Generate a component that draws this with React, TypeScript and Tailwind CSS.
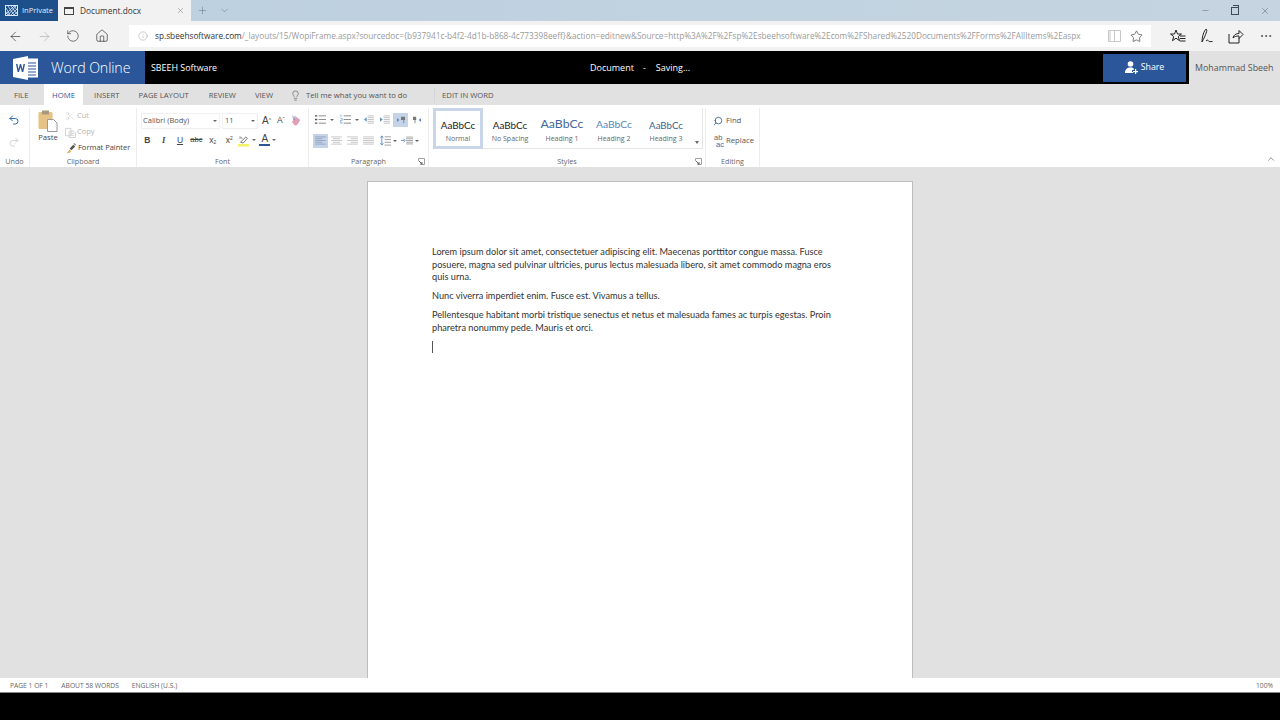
import React from 'react';
import {
  ArrowLeft, ArrowRight, ChevronDown, ChevronUp, House, Info, Lightbulb, Minus, MoreHorizontal,
  Plus, Redo2, RotateCw, Scissors, Search, Star, Undo2, X,
} from 'lucide-react';

const ui = "font-['Open_Sans',sans-serif]";

function WordLogo() {
  return (
    <svg width="26" height="24" viewBox="0 0 26 24">
      <rect x="9" y="2.5" width="16" height="19" fill="#fff" />
      <path d="M12 7h11M12 10h11M12 13h11M12 16h11M12 19h11" stroke="#2b579a" strokeWidth="1.2" />
      <path d="M0 3l15-3v24l-15-3z" fill="#fff" />
      <path d="M3 8l1.600 8h1.400l1.500-5 1.400 5h1.400l1.700-8h-1.500l-1 5.200-1.400-5.200h-1.200l-1.500 5.200-.9-5.200z" fill="#2b579a" />
    </svg>
  );
}

function InPrivateIcon() {
  return (
    <svg width="13" height="11" viewBox="0 0 13 11">
      <rect x="0.5" y="0.500" width="12" height="10" fill="none" stroke="#dbe7f5" />
      <path d="M1 3l4 7M3 1l6 9M6 1l6 8M9 1l3 4M1 7l2 3M1 9l8-8M3 10l8-9M6 10l6-6M9 10l3-3" stroke="#dbe7f5" strokeWidth=".8" />
    </svg>
  );
}

function HubIcon() {
  return (
    <svg width="16" height="15" viewBox="0 0 16 15" fill="none" stroke="#222" strokeWidth="1">
      <path d="M6 1l1.500 4h4l-3.200 2.500 1.200 4.200-3.500-2.500-3.500 2.500 1.200-4.200L.5 5h4z" />
      <path d="M10 7h5.500M10 9.500h5.500M10 12h5.500" />
    </svg>
  );
}

function PenIcon() {
  return (
    <svg width="16" height="16" viewBox="0 0 16 16" fill="none" stroke="#222" strokeWidth="1">
      <path d="M3 14c0-4 1-9 3.500-12.500 1.500-1 1.500 1 1 2.500C6.500 7 5 10.500 3 14zM7 13c1.500-1.500 2-1 2.500 0s1.500.5 4 .5" />
    </svg>
  );
}

function ShareIcon() {
  return (
    <svg width="16" height="15" viewBox="0 0 16 15" fill="none" stroke="#222" strokeWidth="1">
      <path d="M1 5v9h10V9M5 9c.500-3 3-4.500 6-4.500V1.500l4 4-4 4V7C8.500 7 6.500 7.500 5 9z" />
    </svg>
  );
}

function ShareUserIcon() {
  return (
    <svg width="13" height="13" viewBox="0 0 13 13" fill="#fff">
      <circle cx="5.500" cy="3" r="2.800" />
      <path d="M0 12c0-3.500 2-5.500 5.500-5.500 1.500 0 2.500.4 3.200 1V9H7v2h1v1z" />
      <path d="M10 8h1.200v2H13v1.200h-1.800V13H10v-1.800H8V10h2z" />
    </svg>
  );
}

function PasteIcon() {
  return (
    <svg width="20" height="22" viewBox="0 0 20 22">
      <rect x="0.500" y="2" width="14" height="17" rx="1" fill="#e6c284" />
      <rect x="4" y="0.500" width="7" height="4" fill="#a8977c" />
      <path d="M9.500 9.500h6l3.500 3.500v8.500H9.500z" fill="#fff" stroke="#9a9a9a" />
    </svg>
  );
}

function CopyIcon() {
  return (
    <svg width="11" height="11" viewBox="0 0 12 12" fill="none" stroke="#cfcfcf">
      <path d="M.5 1.500h6v8h-6zM4.500 4.500h5l2 2v5h-7z" fill="#fff" />
      <path d="M6 7h4M6 9h4" />
    </svg>
  );
}

function BrushIcon() {
  return (
    <svg width="12" height="12" viewBox="0 0 13 13">
      <path d="M1 12c2-.5 3-2 3.500-4L7 10c-1.500 1.500-3.500 2.500-6 2z" fill="#d9b262" />
      <path d="M5 7l4-4 2 2-4 4z" fill="#555" />
      <path d="M9 2l1-1 2 2-1 1z" fill="#888" />
    </svg>
  );
}

function EraserIcon() {
  return (
    <svg width="11" height="11" viewBox="0 0 13 13">
      <path d="M1 8l5-6 5 4-4 6H4z" fill="#e0a0b8" />
      <path d="M2 1l1.500 5M5 1L3.500 6" stroke="#8c8cc0" fill="none" />
    </svg>
  );
}

function HighlightIcon() {
  return (
    <svg width="12" height="13" viewBox="0 0 14 14">
      <path d="M3 9l6-6 2 1.500-5 5.500z" fill="none" stroke="#666" />
      <path d="M1 4h4M2 2l3 3" stroke="#777" strokeWidth=".8" />
      <rect x="0" y="11" width="13" height="3" fill="#f4f06a" />
    </svg>
  );
}

function ListLines({ numbered }: { numbered?: boolean }) {
  return (
    <svg width="11" height="11" viewBox="0 0 12 12" stroke="#777" strokeWidth=".9">
      <path d="M4 2h8M4 6h8M4 10h8" />
      {numbered ? (
        <path d="M1 .5v3M.5 5h2v2h-2v2h2M.500 10h2" stroke="#7aa0cc" strokeWidth=".8" fill="none" />
      ) : (
        <path d="M0 2h2.500M0 6h2.500M0 10h2.500" strokeWidth="1.500" stroke="#555" />
      )}
    </svg>
  );
}

function Indent({ flip }: { flip?: boolean }) {
  return (
    <svg width="11" height="9" viewBox="0 0 12 10">
      <path d="M5 1h7M5 3h7M5 5h7M5 7h7M5 9h7" stroke="#bdbdbd" strokeWidth="1" />
      {flip ? <path d="M4 5L1 2.500v5z" fill="#5c8cc2" /> : <path d="M1 5l3-2.500v5z" fill="#5c8cc2" />}
    </svg>
  );
}

function Direction({ rtl }: { rtl?: boolean }) {
  return (
    <svg width="10" height="8" viewBox="0 0 12 10" fill="#777">
      <path d={rtl ? 'M1 1h4v4H4v4H3V5H1z' : 'M6 1h5v4h-1v4H9V5H6z'} />
      <path d={rtl ? 'M8 5l3-2.500v5z' : 'M1 2.500L4 5 1 7.500z'} fill="#5c8cc2" />
    </svg>
  );
}

function Align({ kind }: { kind: 'left' | 'center' | 'right' | 'justify' }) {
  const d = {
    left: 'M0 1h12M0 3h8M0 5h12M0 7h8M0 9h12',
    center: 'M0 1h12M2 3h8M0 5h12M2 7h8M0 9h12',
    right: 'M0 1h12M4 3h8M0 5h12M4 7h8M0 9h12',
    justify: 'M0 1h12M0 3h12M0 5h12M0 7h12M0 9h12',
  }[kind];
  return (
    <svg width="11" height="9" viewBox="0 0 12 10" fill="none" stroke={kind === 'left' ? '#8fa3c0' : '#c2c2c2'}>
      <path d={d} />
    </svg>
  );
}

function LineSpacing() {
  return (
    <svg width="11" height="11" viewBox="0 0 12 12" fill="none" stroke="#999">
      <path d="M5 2h7M5 5h7M5 8h7M5 11h7" />
      <path d="M2 1v10M.5 3L2 1l1.500 2M.5 9L2 11l1.500-2" stroke="#5c8cc2" />
    </svg>
  );
}

function ParaSpacing() {
  return (
    <svg width="12" height="9" viewBox="0 0 14 10" fill="none" stroke="#999">
      <path d="M6 1h8M6 3h8M6 5h8M6 7h8M6 9h8" />
      <path d="M0 5h4M3 3l2 2-2 2" stroke="#5c8cc2" />
    </svg>
  );
}

function Launcher() {
  return (
    <svg width="7" height="7" viewBox="0 0 7 7" fill="none" stroke="#a0a0a0">
      <path d="M.5 3V.5H6.500V6.500H3" />
      <path d="M1 3l3 3M4 4v2H2" stroke="#666" />
    </svg>
  );
}

function ReplaceIcon() {
  return (
    <span className="relative block w-[12px] h-[13px] text-[#666]">
      <span className="absolute left-[1px] top-[-1px] text-[7.500px] leading-none font-['Liberation_Sans',sans-serif]">ab</span>
      <span className="absolute left-[3px] top-[6px] text-[7.500px] leading-none text-[#2f6cae] font-['Liberation_Sans',sans-serif]">ac</span>
    </span>
  );
}

function Caret({ className = '' }: { className?: string }) {
  return <span className={`inline-block border-x-[2px] border-t-[2px] border-x-transparent border-t-[#666] ${className}`} />;
}

function Group({ label, width, launcher, children }: { label: string; width: string; launcher?: boolean; children: React.ReactNode }) {
  return (
    <div className={`${width} relative flex flex-col h-[59px] mt-[3px] border-r border-[#ededed]`}>
      <div className="flex-1 min-h-0">{children}</div>
      <div className="h-[13px] text-center text-[7.200px] leading-[13px] text-[#666] pt-[1px]">{label}</div>
      {launcher && <span className="absolute right-[3px] bottom-[2px] flex"><Launcher /></span>}
    </div>
  );
}

function ParaBtn({ active, children }: { active?: boolean; children: React.ReactNode }) {
  return (
    <span className={`w-[15px] h-[14px] mr-px flex items-center justify-center ${active ? 'bg-[#c5d3e9]' : ''}`}>{children}</span>
  );
}

function FontBtn({ children, className = '' }: { children: React.ReactNode; className?: string }) {
  return <span className={`w-[16.400px] text-center text-[#444] leading-none ${className}`}>{children}</span>;
}

const styleItems = [
  { name: 'No Spacing', cls: 'text-[9.900px] text-[#222] mt-[10px]', label: 'mt-[1px]' },
  { name: 'Heading 1', cls: 'text-[12.300px] text-[#3f6797] mt-[9px]', label: 'mt-[2px]' },
  { name: 'Heading 2', cls: 'text-[10.300px] text-[#5a86bc] mt-[9px]', label: 'mt-[2px]' },
  { name: 'Heading 3', cls: 'text-[9.700px] text-[#3b5f8c] mt-[10px]', label: 'mt-[1px]' },
];

function Ribbon() {
  return (
    <div className="relative h-[62px] bg-white flex">
      <Group label="Undo" width="w-[30px]">
        <div className="flex flex-col items-center gap-[10px] pt-[6px] pr-[1px]">
          <Undo2 size={12} strokeWidth={2} className="text-[#2f6cae]" />
          <Redo2 size={12} strokeWidth={1.500} className="text-[#c8c8c8]" />
        </div>
      </Group>

      <Group label="Clipboard" width="w-[107px]">
        <div className="flex pl-[8px]">
          <div className="w-[20px] flex flex-col items-center pt-[2px] shrink-0">
            <PasteIcon />
            <span className="text-[7.700px] leading-[10px] text-[#444]">Paste</span>
          </div>
          <div className="ml-[7px] flex flex-col text-[7.500px]">
            <div className="h-[16px] flex items-center gap-[2px] text-[#b5b5b5]"><Scissors size={10} strokeWidth={1} className="text-[#c6c6c6]" />Cut</div>
            <div className="h-[16px] flex items-center gap-[1px] text-[#b5b5b5]"><CopyIcon />Copy</div>
            <div className="h-[16px] flex items-center gap-[1px] text-[#444] whitespace-nowrap"><BrushIcon />Format Painter</div>
          </div>
        </div>
      </Group>

      <Group label="Font" width="w-[172px]">
        <div className="pl-[4px] pt-[4px]">
          <div className="flex items-center gap-[2px] h-[17px] text-[7.500px] text-[#555]">
            <div className="w-[79px] h-[16px] flex items-center justify-between pl-[1px] pr-[2px] border border-[#f0f0f0]">Calibri (Body)<Caret /></div>
            <div className="w-[36px] h-[16px] flex items-center justify-between px-[2px] border border-[#f0f0f0]">11<Caret /></div>
            <span className="ml-[2px] text-[10px] text-[#444] font-['Liberation_Sans',sans-serif]">A<sup className="text-[5px]">^</sup></span>
            <span className="ml-[4px] text-[8.500px] text-[#444] font-['Liberation_Sans',sans-serif]">A<sup className="text-[5px]">ˇ</sup></span>
            <span className="ml-[5px] flex"><EraserIcon /></span>
          </div>
          <div className="flex items-center h-[16px] mt-[3px] -ml-[2px] text-[8.500px] font-['Liberation_Sans',sans-serif]">
            <FontBtn className="font-bold">B</FontBtn>
            <FontBtn className="italic font-['Liberation_Serif',serif] font-bold">I</FontBtn>
            <FontBtn className="underline">U</FontBtn>
            <FontBtn className="line-through text-[7.500px]">abc</FontBtn>
            <FontBtn>x<sub className="text-[5px]">2</sub></FontBtn>
            <FontBtn>x<sup className="text-[5px]">2</sup></FontBtn>
            <span className="ml-[1px] flex items-center gap-[2px]"><HighlightIcon /><Caret /></span>
            <span className="ml-[3px] flex items-center gap-[2px]">
              <span className="flex flex-col items-center w-[11px] text-[10px] leading-[10px] text-[#444]">A<span className="block w-[11px] h-[2px] bg-[#2b579a]" /></span>
              <Caret />
            </span>
          </div>
        </div>
      </Group>

      <Group label="Paragraph" width="w-[120px]" launcher>
        <div className="pl-[4px] pt-[4px]">
          <div className="flex items-center h-[15px]">
            <ParaBtn><ListLines /></ParaBtn>
            <Caret className="ml-[1px] mr-[4px]" />
            <ParaBtn><ListLines numbered /></ParaBtn>
            <Caret className="ml-[1px] mr-[2px]" />
            <ParaBtn><Indent /></ParaBtn>
            <ParaBtn><Indent flip /></ParaBtn>
            <ParaBtn active><Direction /></ParaBtn>
            <ParaBtn><Direction rtl /></ParaBtn>
          </div>
          <div className="flex items-center h-[15px] mt-[6px]">
            <ParaBtn active><Align kind="left" /></ParaBtn>
            <ParaBtn><Align kind="center" /></ParaBtn>
            <ParaBtn><Align kind="right" /></ParaBtn>
            <ParaBtn><Align kind="justify" /></ParaBtn>
            <span className="ml-[3px] flex items-center gap-[2px]"><LineSpacing /><Caret /></span>
            <span className="ml-[4px] flex items-center gap-[2px]"><ParaSpacing /><Caret /></span>
          </div>
        </div>
      </Group>

      <Group label="Styles" width="w-[277px]" launcher>
        <div className="ml-[4px] mr-[2px] h-[41px] flex border-b border-r border-[#e6e6e6]">
          <div className="w-[50px] h-[41px] mr-px shrink-0 flex flex-col items-center border-[3px] border-[#c9d5e8]">
            <div className="mt-[7px] h-[15px] flex items-center whitespace-nowrap font-['Lato',sans-serif] text-[9.900px] text-[#222]">AaBbCc</div>
            <div className="mt-[1px] text-[7px] leading-[10px] text-[#666]">Normal</div>
          </div>
          {styleItems.map((s) => (
            <div key={s.name} className="w-[52px] h-[41px] shrink-0 flex flex-col items-center">
              <div className={`h-[15px] flex items-center whitespace-nowrap font-['Lato',sans-serif] ${s.cls}`}>AaBbCc</div>
              <div className={`text-[7px] leading-[10px] whitespace-nowrap text-[#666] ${s.label}`}>{s.name}</div>
            </div>
          ))}
          <div className="flex-1 flex items-end justify-center pb-[4px]"><Caret className="border-x-[2px] border-t-[3px]" /></div>
        </div>
      </Group>

      <Group label="Editing" width="w-[54px]">
        <div className="pl-[7px] pt-[3px] text-[7.700px] text-[#555]">
          <div className="h-[20px] flex items-center gap-[3px]"><Search size={10} strokeWidth={2} className="-scale-x-100 text-[#2f5d93]" />Find</div>
          <div className="h-[20px] flex items-center gap-[1px]"><ReplaceIcon />Replace</div>
        </div>
      </Group>

      <ChevronUp size={10} strokeWidth={1.500} className="absolute right-[4px] bottom-[3px] text-[#555]" />
    </div>
  );
}

export default function App() {
  return (
    <div className={`h-screen w-full overflow-hidden flex flex-col bg-black ${ui}`}>
      {/* browser tab strip */}
      <div className="h-[21px] shrink-0 flex items-center bg-gradient-to-r from-[#bcd0e0] to-[#c5d4e0]">
        <div className="w-[58px] h-full bg-[#1d4f8b] flex items-center gap-[4px] pl-[5px] text-[7.500px] text-[#e3eefa]">
          <InPrivateIcon />InPrivate
        </div>
        <div className="w-[133px] h-full bg-[#f2f2f2] flex items-center pl-[5px] pr-[6px] text-[#333]">
          <span className="w-[10px] h-[8px] border border-[#444] border-t-2 mr-[6px] ml-[1px]" />
          <span className="flex-1 text-[8.300px] pt-px">Document.docx</span>
          <X size={9} strokeWidth={1} className="text-[#555]" />
        </div>
        <Plus size={11} strokeWidth={1.200} className="ml-[6px] text-[#607a90]" />
        <ChevronDown size={11} strokeWidth={1.200} className="ml-[11px] text-[#607a90]" />
        <div className="ml-auto flex items-center gap-[21px] pr-[10px] text-[#3d4a55]">
          <Minus size={9} strokeWidth={1} />
          <span className="relative w-[8px] h-[8px] border border-[#3d4a55] after:absolute after:left-[1px] after:top-[-3px] after:w-[6px] after:h-[6px] after:border-t after:border-r after:border-[#3d4a55]" />
          <X size={10} strokeWidth={1} />
        </div>
      </div>

      {/* browser nav bar */}
      <div className="h-[30px] shrink-0 bg-[#f2f2f2] flex items-center">
        <ArrowLeft size={15} strokeWidth={1} className="ml-[8px] text-[#222]" />
        <ArrowRight size={15} strokeWidth={1} className="ml-[14px] text-[#a9a9a9]" />
        <RotateCw size={14} strokeWidth={1} className="ml-[14px] -scale-x-100 text-[#222]" />
        <House size={14} strokeWidth={1.100} className="ml-[15px] text-[#222]" />
        <div className="ml-[20px] w-[1022px] h-[22px] bg-white flex items-center pl-[9px] pr-[8px]">
          <Info size={10} strokeWidth={1} className="text-[#888] shrink-0" />
          <div className="ml-[7px] text-[8.250px] whitespace-nowrap flex-1 min-w-0 text-[#9a9a9a]">
            <span className="text-[#333]">sp.sbeehsoftware.com</span>/_layouts/15/WopiFrame.aspx?sourcedoc={'{'}b937941c-b4f2-4d1b-b868-4c773398eeff{'}'}&amp;action=editnew&amp;Source=http%3A%2F%2Fsp%2Esbeehsoftware%2Ecom%2FShared%2520Documents%2FForms%2FAllItems%2Easpx
          </div>
          <svg width="13" height="12" viewBox="0 0 13 12" fill="none" stroke="#c9c9c9" className="ml-[8px] shrink-0"><path d="M.5.5h12v11H.5zM6.500.5v11M2 .5v11" /></svg>
          <Star size={13} strokeWidth={1.100} className="ml-[9px] text-[#222] shrink-0" />
        </div>
        <div className="flex items-center ml-[19px]"><HubIcon /></div>
        <div className="flex items-center ml-[13px]"><PenIcon /></div>
        <div className="flex items-center ml-[13px]"><ShareIcon /></div>
        <MoreHorizontal size={14} strokeWidth={1.200} className="ml-[15px] text-[#333]" />
      </div>

      {/* word header */}
      <div className="h-[33px] shrink-0 flex bg-[#e1e1e1]">
        <div className="w-[1189px] h-full bg-black flex items-center relative">
          <div className="w-[145px] h-full bg-[#2b579a] flex items-center pl-[13px]">
            <WordLogo />
            <span className="ml-[12px] pt-px text-[14.200px] text-white font-light tracking-[-0.1px]">Word Online</span>
          </div>
          <span className="ml-[6px] pt-px text-[8.900px] text-white">SBEEH Software</span>
          <div className="absolute left-[590px] top-[11px] text-[9px] leading-[12px] text-white flex">
            <span>Document</span><span className="ml-[9px]">-</span><span className="ml-[10px]">Saving...</span>
          </div>
          <div className="ml-auto mr-[3px] w-[83px] h-[28px] bg-[#2b579a] flex items-center justify-center gap-[3px] text-[8.800px] text-white">
            <ShareUserIcon />Share
          </div>
        </div>
        <div className="flex-1 flex items-center pl-[6px] pt-px text-[8.900px] text-[#555] whitespace-nowrap">Mohammad Sbeeh</div>
      </div>

      {/* ribbon tabs */}
      <div className="h-[21px] shrink-0 bg-[#e1e1e1] flex items-center pt-[2px] text-[7.700px] text-[#555]">
        <span className="w-[44px] pl-[14px]">FILE</span>
        <span className="w-[39px] h-[21px] -mt-[2px] pt-[2px] bg-white flex items-center justify-center text-[#2b579a]">HOME</span>
        <span className="ml-[11px]">INSERT</span>
        <span className="ml-[19px]">PAGE LAYOUT</span>
        <span className="ml-[20px]">REVIEW</span>
        <span className="ml-[19px]">VIEW</span>
        <Lightbulb size={11} strokeWidth={1.200} className="ml-[17px] text-[#444]" />
        <span className="ml-[5px]">Tell me what you want to do</span>
        <span className="ml-[27px] pl-[7px] border-l border-[#d5d5d5] leading-[15px]">EDIT IN WORD</span>
      </div>

      <Ribbon />

      {/* canvas */}
      <div className="h-[511px] shrink-0 bg-[#e1e1e1] overflow-hidden pt-[14px] pl-[367px]">
        <div className="w-[546px] h-[497px] bg-white border-x border-t border-[#bdbdbd] pl-[64px] pt-[64px] text-[9.200px] leading-[12.600px] text-[#333] font-['Lato',sans-serif] whitespace-nowrap">
          <p>
            Lorem ipsum dolor sit amet, consectetuer adipiscing elit. Maecenas porttitor congue massa. Fusce<br />
            posuere, magna sed pulvinar ultricies, purus lectus malesuada libero, sit amet commodo magna eros<br />
            quis urna.
          </p>
          <p className="mt-[6.500px]">Nunc viverra imperdiet enim. Fusce est. Vivamus a tellus.</p>
          <p className="mt-[6.500px]">
            Pellentesque habitant morbi tristique senectus et netus et malesuada fames ac turpis egestas. Proin<br />
            pharetra nonummy pede. Mauris et orci.
          </p>
          <div className="mt-[6.500px] w-px h-[12px] bg-[#555]" />
        </div>
      </div>

      {/* status bar */}
      <div className="h-[15px] shrink-0 bg-white flex items-center pt-[2px] pl-[10px] pr-[7px] text-[6.700px] text-[#666] border-b border-[#888] gap-[13px]">
        <span>PAGE 1 OF 1</span>
        <span>ABOUT 58 WORDS</span>
        <span>ENGLISH (U.S.)</span>
        <span className="ml-auto">100%</span>
      </div>
      <div className="flex-1 bg-black" />
    </div>
  );
}
